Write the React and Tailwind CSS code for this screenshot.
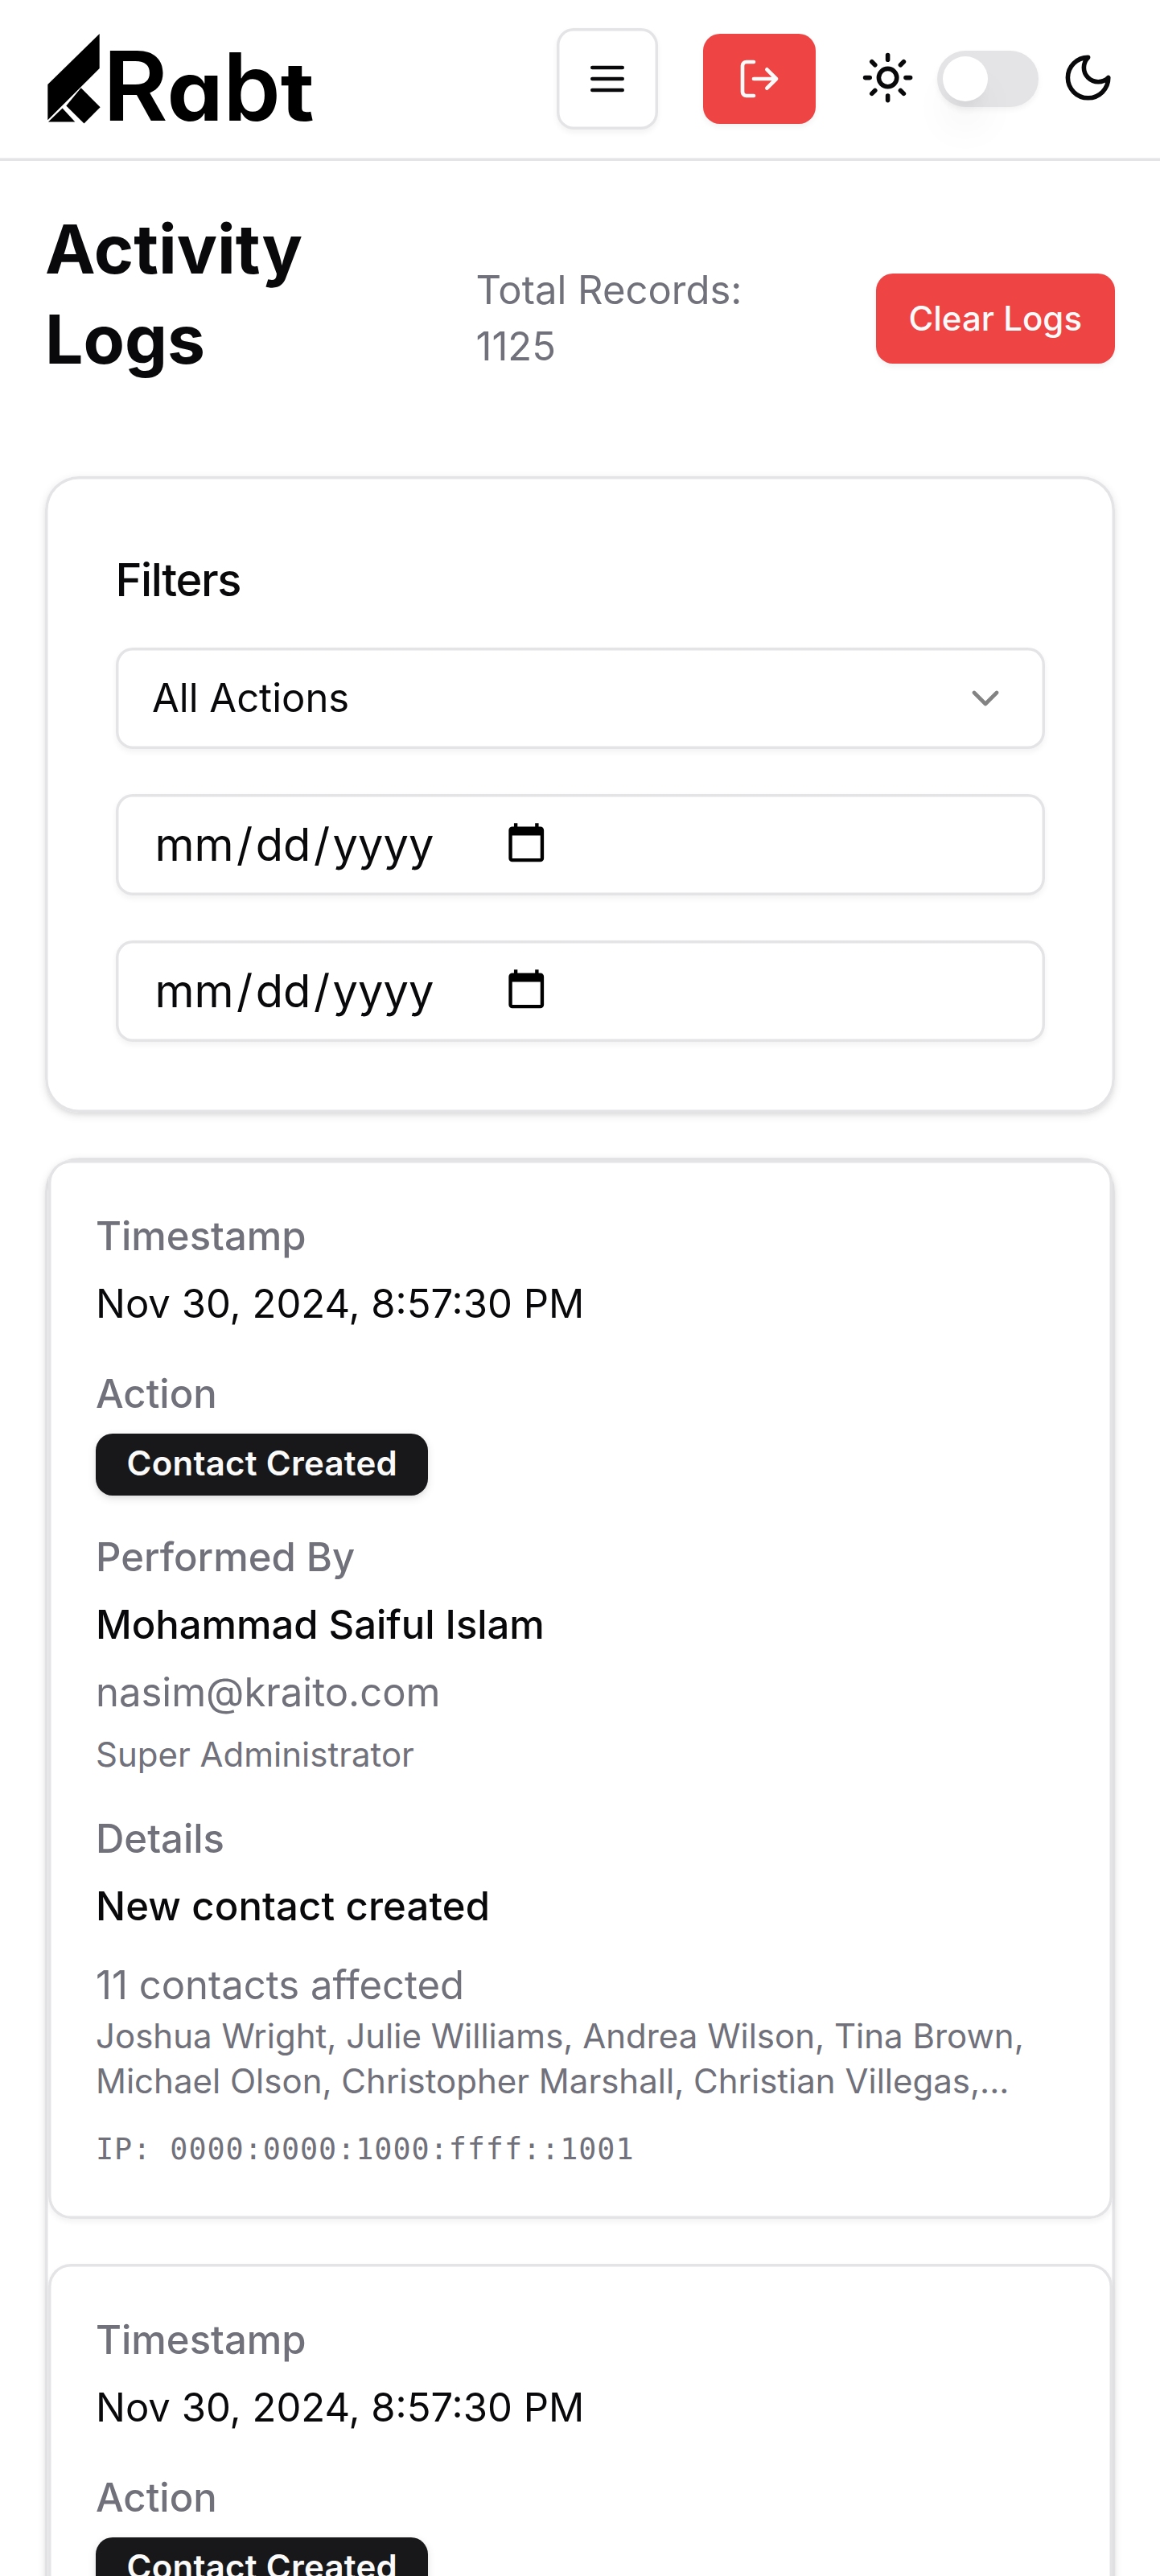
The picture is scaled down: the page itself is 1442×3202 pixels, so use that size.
const LOGS = [
  {
    time: "Nov 30, 2024, 8:57:30 PM",
    action: "Contact Created",
    name: "Mohammad Saiful Islam",
    email: "nasim@kraito.com",
    role: "Super Administrator",
    details: "New contact created",
    affected: "11 contacts affected",
    contacts: [
      "Joshua Wright, Julie Williams, Andrea Wilson, Tina Brown,",
      "Michael Olson, Christopher Marshall, Christian Villegas,...",
    ],
    ip: "IP: 0000:0000:1000:ffff::1001",
  },
  {
    time: "Nov 30, 2024, 8:57:30 PM",
    action: "Contact Created",
  },
];

function Icon({ className, children }) {
  return (
    <svg
      viewBox="0 0 24 24"
      fill="none"
      stroke="currentColor"
      strokeWidth="2"
      strokeLinecap="round"
      strokeLinejoin="round"
      className={className}
    >
      {children}
    </svg>
  );
}

function Logo() {
  return (
    <svg viewBox="56 0 336 196" className="h-14 w-24 shrink-0" fill="#000" aria-label="Rabt">
      <polygon points="59.3,105 123.7,42 123.7,85 59.3,149.3" />
      <polygon points="100.7,109.3 124.6,133.3 104.5,153.5 82.3,131.4" />
      <polygon points="60,151.6 93.3,151.6 77.6,134.5" />
      <g
        fontFamily="Inter, sans-serif"
        fontWeight="700"
        style={{ fontFeatureSettings: '"cv11"' }}
      >
        <text transform="translate(127.7 149.7) scale(1.04 1)" fontSize="119.5" fontWeight="600">R</text>
        <text transform="translate(207.8 149.7) scale(1.05 .98)" fontSize="105">a</text>
        <text transform="translate(277.6 149.7) scale(1.01 1.03)" fontSize="113" fontWeight="600">b</text>
        <text transform="translate(348.8 149.7) scale(1.08 .95)" fontSize="106">t</text>
      </g>
    </svg>
  );
}

function Header() {
  return (
    <header className="flex h-[57px] items-center justify-between px-4 pb-px shadow-[inset_0_-1px_0_#e4e4e7]">
      <Logo />
      <div className="flex items-center gap-4">
        <button className="flex size-9 items-center justify-center rounded-md bg-white shadow-xs ring-1 ring-zinc-200 ring-inset">
          <Icon className="size-4">
            <path d="M4 6h16M4 12h16M4 18h16" />
          </Icon>
        </button>
        <button className="flex h-8 items-center rounded-md bg-[#ef4444] px-3 text-[#fafafa] shadow-xs">
          <Icon className="size-4">
            <path d="M9 21H5a2 2 0 0 1-2-2V5a2 2 0 0 1 2-2h4" />
            <path d="m16 17 5-5-5-5M21 12H9" />
          </Icon>
        </button>
        <div className="flex items-start gap-2">
          <Icon className="size-[19.2px]">
            <circle cx="12" cy="12" r="4" />
            <path d="M12 2v2M12 20v2M4.93 4.93l1.41 1.41M17.66 17.66l1.41 1.41M2 12h2M20 12h2M6.34 17.66l-1.41 1.41M19.07 4.93l-1.41 1.41" />
          </Icon>
          <div className="flex h-5 w-9 items-center rounded-full bg-zinc-200 px-0.5 shadow-xs">
            <div className="size-4 rounded-full bg-white shadow-lg" />
          </div>
          <Icon className="size-[19.2px]">
            <path d="M12 3a6 6 0 0 0 9 9 9 9 0 1 1-9-9Z" />
          </Icon>
        </div>
      </div>
    </header>
  );
}

function DateField() {
  return (
    <div className="flex h-9 items-center rounded-md px-[13px] text-base shadow-xs ring-1 ring-zinc-200 ring-inset">
      <span className="flex w-[125.5px]">
        <span className="px-px">mm</span>
        <span>/</span>
        <span className="px-px">dd</span>
        <span>/</span>
        <span className="px-px">yyyy</span>
      </span>
      <svg viewBox="0 0 24 24" className="mb-[1.5px] size-[15px] fill-black">
        <path d="M20 3h-1V1h-2v2H7V1H5v2H4c-1.1 0-2 .9-2 2v16c0 1.1.9 2 2 2h16c1.1 0 2-.9 2-2V5c0-1.1-.9-2-2-2zm0 18H4V8h16v13z" />
      </svg>
    </div>
  );
}

function Filters() {
  return (
    <section className="rounded-xl bg-white p-[25px] shadow-sm ring-1 ring-zinc-200 ring-inset">
      <h3 className="mb-3 text-base font-medium tracking-tight">Filters</h3>
      <div className="flex flex-col gap-4">
        <div className="flex h-9 items-center justify-between rounded-md px-[13px] text-sm shadow-xs ring-1 ring-zinc-200 ring-inset">
          <span>All Actions</span>
          <Icon className="size-4 opacity-50">
            <path d="m6 9 6 6 6-6" />
          </Icon>
        </div>
        <DateField />
        <DateField />
      </div>
    </section>
  );
}

function Label({ children }) {
  return <div className="text-sm font-medium text-zinc-500">{children}</div>;
}

function LogCard({ log }) {
  return (
    <article className="flex h-94 flex-col gap-3 rounded-lg bg-white p-[17px] text-sm shadow-xs ring-1 ring-zinc-200 ring-inset">
      <div className="flex flex-col gap-1">
        <Label>Timestamp</Label>
        <div>{log.time}</div>
      </div>
      <div className="flex flex-col items-start gap-1">
        <Label>Action</Label>
        <div className="rounded-md bg-zinc-900 px-[11px] pt-[2.75px] pb-[3.25px] text-xs font-semibold tracking-[0.07px] text-[#fafafa] shadow-sm">
          {log.action}
        </div>
      </div>
      {log.name && (
        <div className="flex flex-col gap-1">
          <Label>Performed By</Label>
          <div className="font-medium tracking-[-0.01px]">{log.name}</div>
          <div className="text-zinc-500">{log.email}</div>
          <div className="text-xs text-zinc-500">{log.role}</div>
        </div>
      )}
      {log.details && (
        <div className="flex flex-col gap-1">
          <Label>Details</Label>
          <div className="font-medium tracking-[0.04px]">{log.details}</div>
          <div className="mt-1 text-zinc-500">
            <div>{log.affected}</div>
            {log.contacts.map((line) => (
              <div key={line} className="text-xs whitespace-nowrap">{line}</div>
            ))}
            <div className="mt-2 pt-px font-['DejaVu_Sans_Mono',monospace] text-[10.5px]/[15px] tracking-[0.275px]">
              {log.ip}
            </div>
          </div>
        </div>
      )}
    </article>
  );
}

export default function App() {
  return (
    <div className="h-[914.85px] w-[412px] overflow-hidden bg-white font-['Inter',sans-serif] text-zinc-950 antialiased [zoom:3.5]">
      <Header />
      <main className="flex flex-col gap-4 p-4">
        <div className="flex h-20 items-center">
          <h1 className="mb-[17px] w-[153px] text-2xl font-bold">
            Activity
            <br />
            Logs
          </h1>
          <p className="text-sm text-zinc-500">
            Total Records:
            <br />
            1125
          </p>
          <button className="ml-auto h-8 w-[85px] rounded-md bg-[#ef4444] text-xs font-medium text-[#fafafa] shadow-xs">
            Clear Logs
          </button>
        </div>
        <Filters />
        <section className="flex flex-col gap-4 rounded-xl bg-white p-px shadow-sm ring-1 ring-zinc-200 ring-inset">
          {LOGS.map((log, i) => (
            <LogCard key={i} log={log} />
          ))}
        </section>
      </main>
    </div>
  );
}
